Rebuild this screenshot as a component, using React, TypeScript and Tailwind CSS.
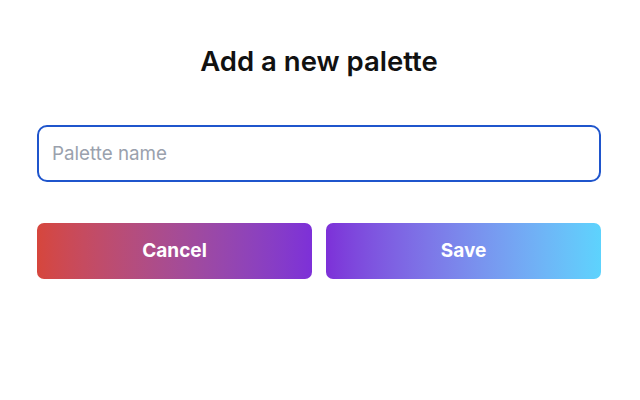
import { useState } from 'react'

export default function App() {
  const [name, setName] = useState('')

  return (
    <div className="w-[640px] h-[400px] bg-white font-['Inter',sans-serif]">
      <div className="w-[564px] ml-[37px] pt-[44px] flex flex-col">
        <h1 className="text-center text-[27.5px] leading-[34px] font-semibold text-[#111111]">
          Add a new palette
        </h1>

        <input
          autoFocus
          value={name}
          onChange={(e) => setName(e.target.value)}
          placeholder="Palette name"
          className="mt-[47px] h-[57px] w-full rounded-[10px] border-2 border-[#1f55cc] px-[13px] text-[18.8px] text-gray-900 placeholder:text-[#9aa1ad] outline-none caret-black"
        />

        <div className="mt-[41px] grid grid-cols-2 gap-[14px]">
          <button className="h-[56px] rounded-[7px] bg-gradient-to-r from-[#d6463c] to-[#7d30d8] text-white text-[19px] font-bold">
            Cancel
          </button>
          <button className="h-[56px] rounded-[7px] bg-gradient-to-r from-[#7d30d8] to-[#5dd3fd] text-white text-[19px] font-bold">
            Save
          </button>
        </div>
      </div>
    </div>
  )
}
